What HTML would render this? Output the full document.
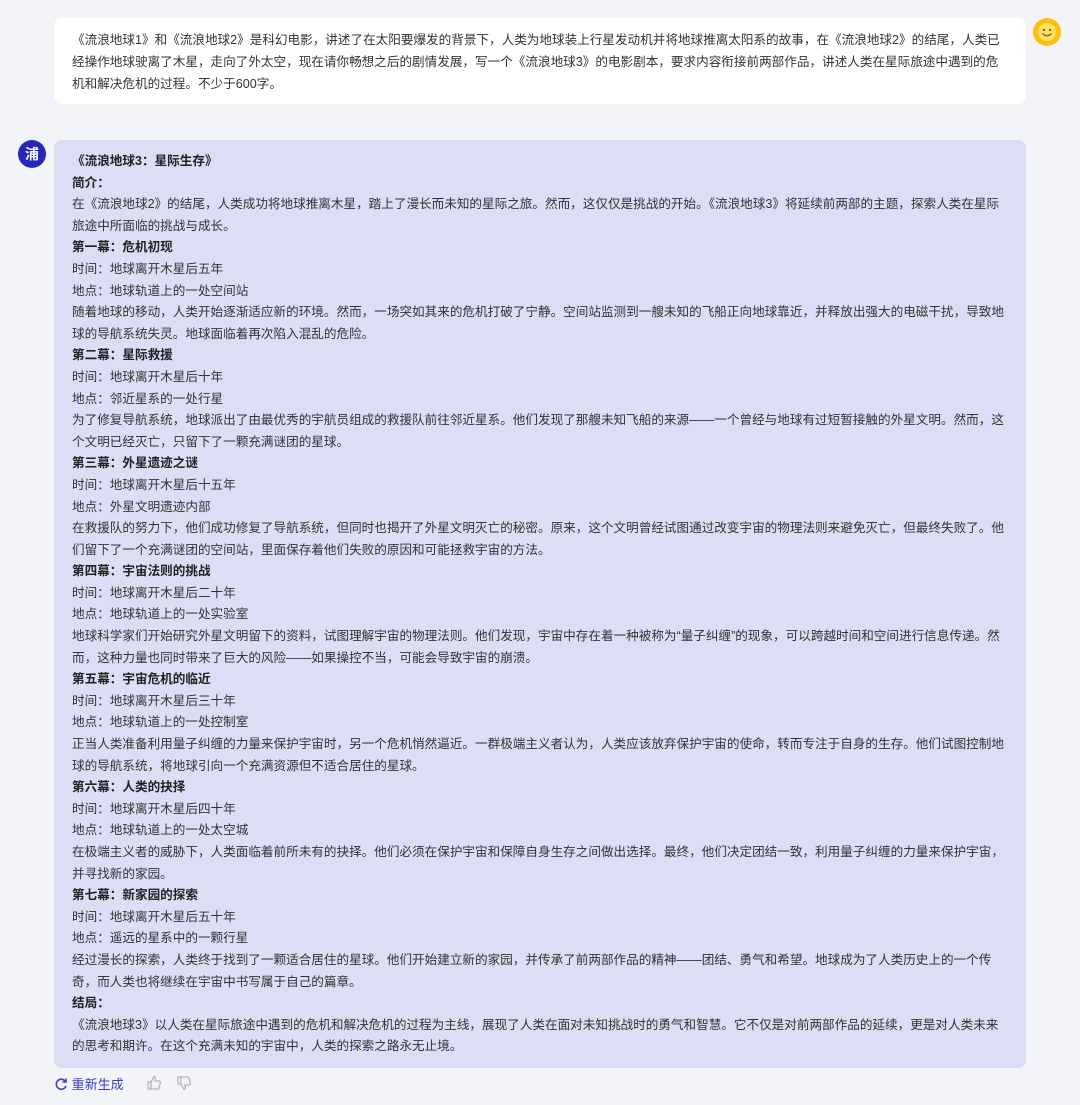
<!DOCTYPE html>
<html><head><meta charset="utf-8"><style>
body{margin:0;width:1080px;height:1105px;background:#f3f4f8;font-family:"Liberation Sans","Noto Sans CJK SC",sans-serif;color:#333;position:relative;overflow:hidden}
.q{position:absolute;left:54px;top:18px;width:936px;height:57px;padding:11px 18px 18px;background:#fff;border-radius:8px;font-size:12.6px;line-height:22px;white-space:nowrap}
.a{position:absolute;left:54px;top:140px;width:936px;height:906px;padding:11px 18px 11px;background:#dcdef5;border-radius:8px;font-size:12.6px;line-height:21.6px;white-space:nowrap}
b{font-weight:bold;color:#222}
.smile{position:absolute;left:1033px;top:18px;width:28px;height:28px;border-radius:50%;background:#fcc010}
.pu{position:absolute;left:18px;top:140px;width:28px;height:28px;border-radius:50%;background:#2629b8;color:#fff;font-weight:bold;font-size:14px;text-align:center;line-height:28px}
.regen{position:absolute;left:54px;top:1076px;font-size:13px;color:#3a3fc4;line-height:18px}
</style></head><body>
<div class="q">《流浪地球1》和《流浪地球2》是科幻电影，讲述了在太阳要爆发的背景下，人类为地球装上行星发动机并将地球推离太阳系的故事，在《流浪地球2》的结尾，人类已<br>经操作地球驶离了木星，走向了外太空，现在请你畅想之后的剧情发展，写一个《流浪地球3》的电影剧本，要求内容衔接前两部作品，讲述人类在星际旅途中遇到的危<br>机和解决危机的过程。不少于600字。</div>
<div class="smile"><svg width="28" height="28" viewBox="0 0 28 28"><circle cx="14" cy="14" r="9" fill="#fde36a"/><circle cx="11" cy="12" r="1.2" fill="#a0600a"/><circle cx="17" cy="12" r="1.2" fill="#a0600a"/><path d="M9.5 15.5q4.5 4.5 9 0" stroke="#a0600a" stroke-width="1.3" fill="none"/></svg></div>
<div class="pu">浦</div>
<div class="a"><b>《流浪地球3：星际生存》</b><br><b>简介：</b><br>在《流浪地球2》的结尾，人类成功将地球推离木星，踏上了漫长而未知的星际之旅。然而，这仅仅是挑战的开始。《流浪地球3》将延续前两部的主题，探索人类在星际<br>旅途中所面临的挑战与成长。<br><b>第一幕：危机初现</b><br>时间：地球离开木星后五年<br>地点：地球轨道上的一处空间站<br>随着地球的移动，人类开始逐渐适应新的环境。然而，一场突如其来的危机打破了宁静。空间站监测到一艘未知的飞船正向地球靠近，并释放出强大的电磁干扰，导致地<br>球的导航系统失灵。地球面临着再次陷入混乱的危险。<br><b>第二幕：星际救援</b><br>时间：地球离开木星后十年<br>地点：邻近星系的一处行星<br>为了修复导航系统，地球派出了由最优秀的宇航员组成的救援队前往邻近星系。他们发现了那艘未知飞船的来源——一个曾经与地球有过短暂接触的外星文明。然而，这<br>个文明已经灭亡，只留下了一颗充满谜团的星球。<br><b>第三幕：外星遗迹之谜</b><br>时间：地球离开木星后十五年<br>地点：外星文明遗迹内部<br>在救援队的努力下，他们成功修复了导航系统，但同时也揭开了外星文明灭亡的秘密。原来，这个文明曾经试图通过改变宇宙的物理法则来避免灭亡，但最终失败了。他<br>们留下了一个充满谜团的空间站，里面保存着他们失败的原因和可能拯救宇宙的方法。<br><b>第四幕：宇宙法则的挑战</b><br>时间：地球离开木星后二十年<br>地点：地球轨道上的一处实验室<br>地球科学家们开始研究外星文明留下的资料，试图理解宇宙的物理法则。他们发现，宇宙中存在着一种被称为“量子纠缠”的现象，可以跨越时间和空间进行信息传递。然<br>而，这种力量也同时带来了巨大的风险——如果操控不当，可能会导致宇宙的崩溃。<br><b>第五幕：宇宙危机的临近</b><br>时间：地球离开木星后三十年<br>地点：地球轨道上的一处控制室<br>正当人类准备利用量子纠缠的力量来保护宇宙时，另一个危机悄然逼近。一群极端主义者认为，人类应该放弃保护宇宙的使命，转而专注于自身的生存。他们试图控制地<br>球的导航系统，将地球引向一个充满资源但不适合居住的星球。<br><b>第六幕：人类的抉择</b><br>时间：地球离开木星后四十年<br>地点：地球轨道上的一处太空城<br>在极端主义者的威胁下，人类面临着前所未有的抉择。他们必须在保护宇宙和保障自身生存之间做出选择。最终，他们决定团结一致，利用量子纠缠的力量来保护宇宙，<br>并寻找新的家园。<br><b>第七幕：新家园的探索</b><br>时间：地球离开木星后五十年<br>地点：遥远的星系中的一颗行星<br>经过漫长的探索，人类终于找到了一颗适合居住的星球。他们开始建立新的家园，并传承了前两部作品的精神——团结、勇气和希望。地球成为了人类历史上的一个传<br>奇，而人类也将继续在宇宙中书写属于自己的篇章。<br><b>结局：</b><br>《流浪地球3》以人类在星际旅途中遇到的危机和解决危机的过程为主线，展现了人类在面对未知挑战时的勇气和智慧。它不仅是对前两部作品的延续，更是对人类未来<br>的思考和期许。在这个充满未知的宇宙中，人类的探索之路永无止境。</div>
<div class="regen"><svg width="14" height="14" viewBox="0 0 14 14" style="vertical-align:-2px"><path d="M11.5 4.5A5 5 0 1 0 12 9" stroke="#3a3fc4" stroke-width="1.6" fill="none"/><path d="M12 1.5v3.5h-3.5" stroke="#3a3fc4" stroke-width="1.6" fill="none"/></svg> 重新生成</div>
<svg style="position:absolute;left:146px;top:1075px" width="16" height="16" viewBox="0 0 16 16"><path d="M2 7h3v7H2zM5 7l3-5.5c1.2 0 1.6 1 1.3 2.3L9 6h4.2c.8 0 1.3.7 1.1 1.5l-1.3 5.3c-.2.7-.7 1.2-1.4 1.2H5" stroke="#aaa" stroke-width="1.1" fill="none"/></svg>
<svg style="position:absolute;left:176px;top:1075px" width="16" height="16" viewBox="0 0 16 16"><path d="M2 9h3V2H2zM5 9l3 5.5c1.2 0 1.6-1 1.3-2.3L9 10h4.2c.8 0 1.3-.7 1.1-1.5L13 3.2C12.8 2.5 12.3 2 11.6 2H5" stroke="#aaa" stroke-width="1.1" fill="none"/></svg>
</body></html>
